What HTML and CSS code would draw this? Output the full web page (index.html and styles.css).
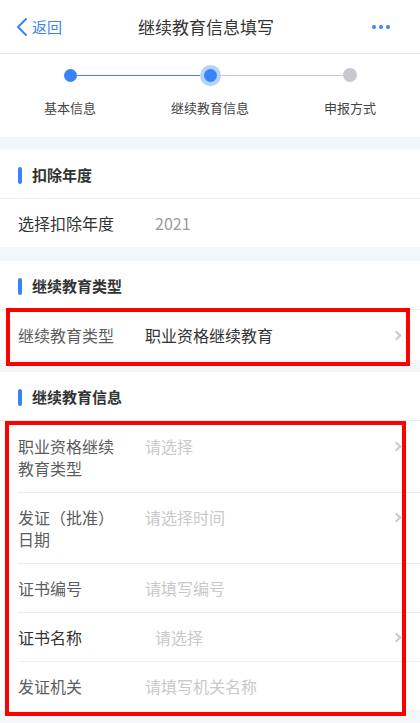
FILE: index.html
```html
<!DOCTYPE html>
<html lang="zh-CN">
<head>
<meta charset="UTF-8" />
<meta name="viewport" content="width=device-width, initial-scale=1" />
<title>继续教育信息填写</title>
<link rel="stylesheet" href="styles.css">
</head>
<body>
<header class="nav-bar">
  <a class="nav-back" href="#">
    <svg width="12" height="20" viewBox="0 0 12 20"><path d="M10 2 L2 10 L10 18" fill="none" stroke="#3a83f7" stroke-width="2" stroke-linecap="round" stroke-linejoin="round"/></svg>
    <span>返回</span>
  </a>
  <div class="nav-title">继续教育信息填写</div>
  <div class="nav-more"><i></i><i></i><i></i></div>
</header>

<div class="steps">
  <div class="step done">
    <span class="step-dot"></span>
    <span class="step-label">基本信息</span>
  </div>
  <div class="step current">
    <span class="step-dot"></span>
    <span class="step-label">继续教育信息</span>
  </div>
  <div class="step">
    <span class="step-dot"></span>
    <span class="step-label">申报方式</span>
  </div>
</div>

<main>
  <section class="group">
    <h2 class="group-title">扣除年度</h2>
    <div class="cell">
      <span class="cell-label">选择扣除年度</span>
      <span class="cell-value muted shift">2021</span>
    </div>
  </section>

  <section class="group">
    <h2 class="group-title">继续教育类型</h2>
    <div class="marked mark-one">
      <div class="cell link">
        <span class="cell-label soft">继续教育类型</span>
        <span class="cell-value">职业资格继续教育</span>
      </div>
    </div>
  </section>

  <section class="group">
    <h2 class="group-title">继续教育信息</h2>
    <div class="marked mark-two">
      <div class="cell link inset">
        <span class="cell-label soft">职业资格继续教育类型</span>
        <span class="cell-value hint">请选择</span>
      </div>
      <div class="cell link inset">
        <span class="cell-label soft">发证（批准）日期</span>
        <span class="cell-value hint">请选择时间</span>
      </div>
      <div class="cell inset">
        <span class="cell-label soft">证书编号</span>
        <span class="cell-value hint">请填写编号</span>
      </div>
      <div class="cell link inset">
        <span class="cell-label">证书名称</span>
        <span class="cell-value hint shift">请选择</span>
      </div>
      <div class="cell inset">
        <span class="cell-label soft">发证机关</span>
        <span class="cell-value hint">请填写机关名称</span>
      </div>
    </div>
  </section>
</main>
</body>
</html>
```

FILE: styles.css
```css
:root {
  --primary-color: #3a83f7;
  --background-color: #f3f6f9;
  --text-color: #333;
  --line-color: #ebedf0;
  --font-family: "Noto Sans CJK SC", "Noto Sans", sans-serif;
}

* {
  box-sizing: border-box;
}

body {
  margin: 0;
  font-family: var(--font-family);
  background: var(--background-color);
  color: var(--text-color);
  width: 420px;
  height: 723px;
  overflow: hidden;
}

/* top bar */
.nav-bar {
  height: 54px;
  background: white;
  border-bottom: 1px solid #e6e6e6;
  display: flex;
  align-items: center;
  justify-content: space-between;
  padding: 0 30px 0 16px;
}

.nav-back {
  display: flex;
  align-items: center;
  gap: 4px;
  color: var(--primary-color);
  text-decoration: none;
  font-size: 15px;
  width: 90px;
}

.nav-title {
  font-size: 17px;
  color: #333;
  margin-left: 6px;
}

.nav-more {
  width: 90px;
  display: flex;
  justify-content: flex-end;
  gap: 3px;
}

.nav-more i {
  width: 4px;
  height: 4px;
  border-radius: 50%;
  background: var(--primary-color);
}

/* stepper */
.steps {
  background: white;
  display: flex;
  height: 83px;
  margin-bottom: 13px;
}

.step {
  flex: 1;
  display: flex;
  flex-direction: column;
  align-items: center;
  position: relative;
  padding-top: 14px;
}

.step::before,
.step::after {
  content: "";
  position: absolute;
  top: 21px;
  height: 1px;
  width: 50%;
  background: #c8c9d2;
}

.step::before {
  left: 0;
}

.step::after {
  right: 0;
}

.step:first-child::before,
.step:last-child::after {
  display: none;
}

.step.done::after,
.step.current::before {
  background: var(--primary-color);
}

.step-dot {
  width: 14px;
  height: 14px;
  border-radius: 50%;
  background: #c8c9cf;
  position: relative;
  z-index: 1;
}

.step.done .step-dot {
  width: 13px;
  height: 13px;
  margin-top: 1px;
  background: var(--primary-color);
}

.step.current .step-dot {
  width: 13px;
  height: 13px;
  margin-top: 1px;
  background: var(--primary-color);
  box-shadow: 0 0 0 4px #b5d2fb;
}

.step-label {
  margin-top: 16px;
  font-size: 13px;
  color: #444;
}

/* groups */
.group {
  background: white;
  margin-bottom: 12px;
}

.group:first-child {
  margin-bottom: 14px;
}

.group-title {
  margin: 0;
  height: 49px;
  display: flex;
  align-items: center;
  padding-left: 32px;
  position: relative;
  font-size: 15px;
  font-weight: 700;
  color: #333;
  border-bottom: 1px solid var(--line-color);
}

.group-title::before {
  content: "";
  position: absolute;
  left: 18px;
  top: 17px;
  width: 4px;
  height: 17px;
  border-radius: 2px;
  background: var(--primary-color);
}

.cell {
  display: flex;
  align-items: flex-start;
  padding: 13px 18px;
  font-size: 16px;
  line-height: 22px;
  position: relative;
}

.mark-one .cell {
  padding: 14px 18px;
}

.cell.inset {
  padding-top: 14px;
}

.cell.inset + .cell.inset::before {
  content: "";
  position: absolute;
  left: 18px;
  right: 0;
  top: 0;
  height: 1px;
  background: var(--line-color);
}

.cell-label {
  width: 100px;
  flex-shrink: 0;
  color: #333;
}

.cell-label.soft {
  color: #5c5d60;
}

.cell-value {
  margin-left: 27px;
  color: #333;
}

.cell-value.shift {
  margin-left: 37px;
}

.cell-value.muted {
  color: #9a9ba0;
}

.cell-value.hint {
  color: #c8c9cc;
}

.cell.link::after {
  content: "";
  position: absolute;
  right: 20px;
  top: 22px;
  width: 5px;
  height: 5px;
  border-top: 2px solid #c8c9cc;
  border-right: 2px solid #c8c9cc;
  transform: rotate(45deg);
}

/* red markers drawn over the screenshot */
.marked {
  position: relative;
}

.marked::after {
  content: "";
  position: absolute;
  border: 4px solid #ff0000;
  pointer-events: none;
}

.mark-one::after {
  left: 6px;
  right: 10px;
  top: -2px;
  bottom: -6px;
}

.mark-two::after {
  left: 5px;
  right: 14px;
  top: 0;
  bottom: -6px;
}
```
